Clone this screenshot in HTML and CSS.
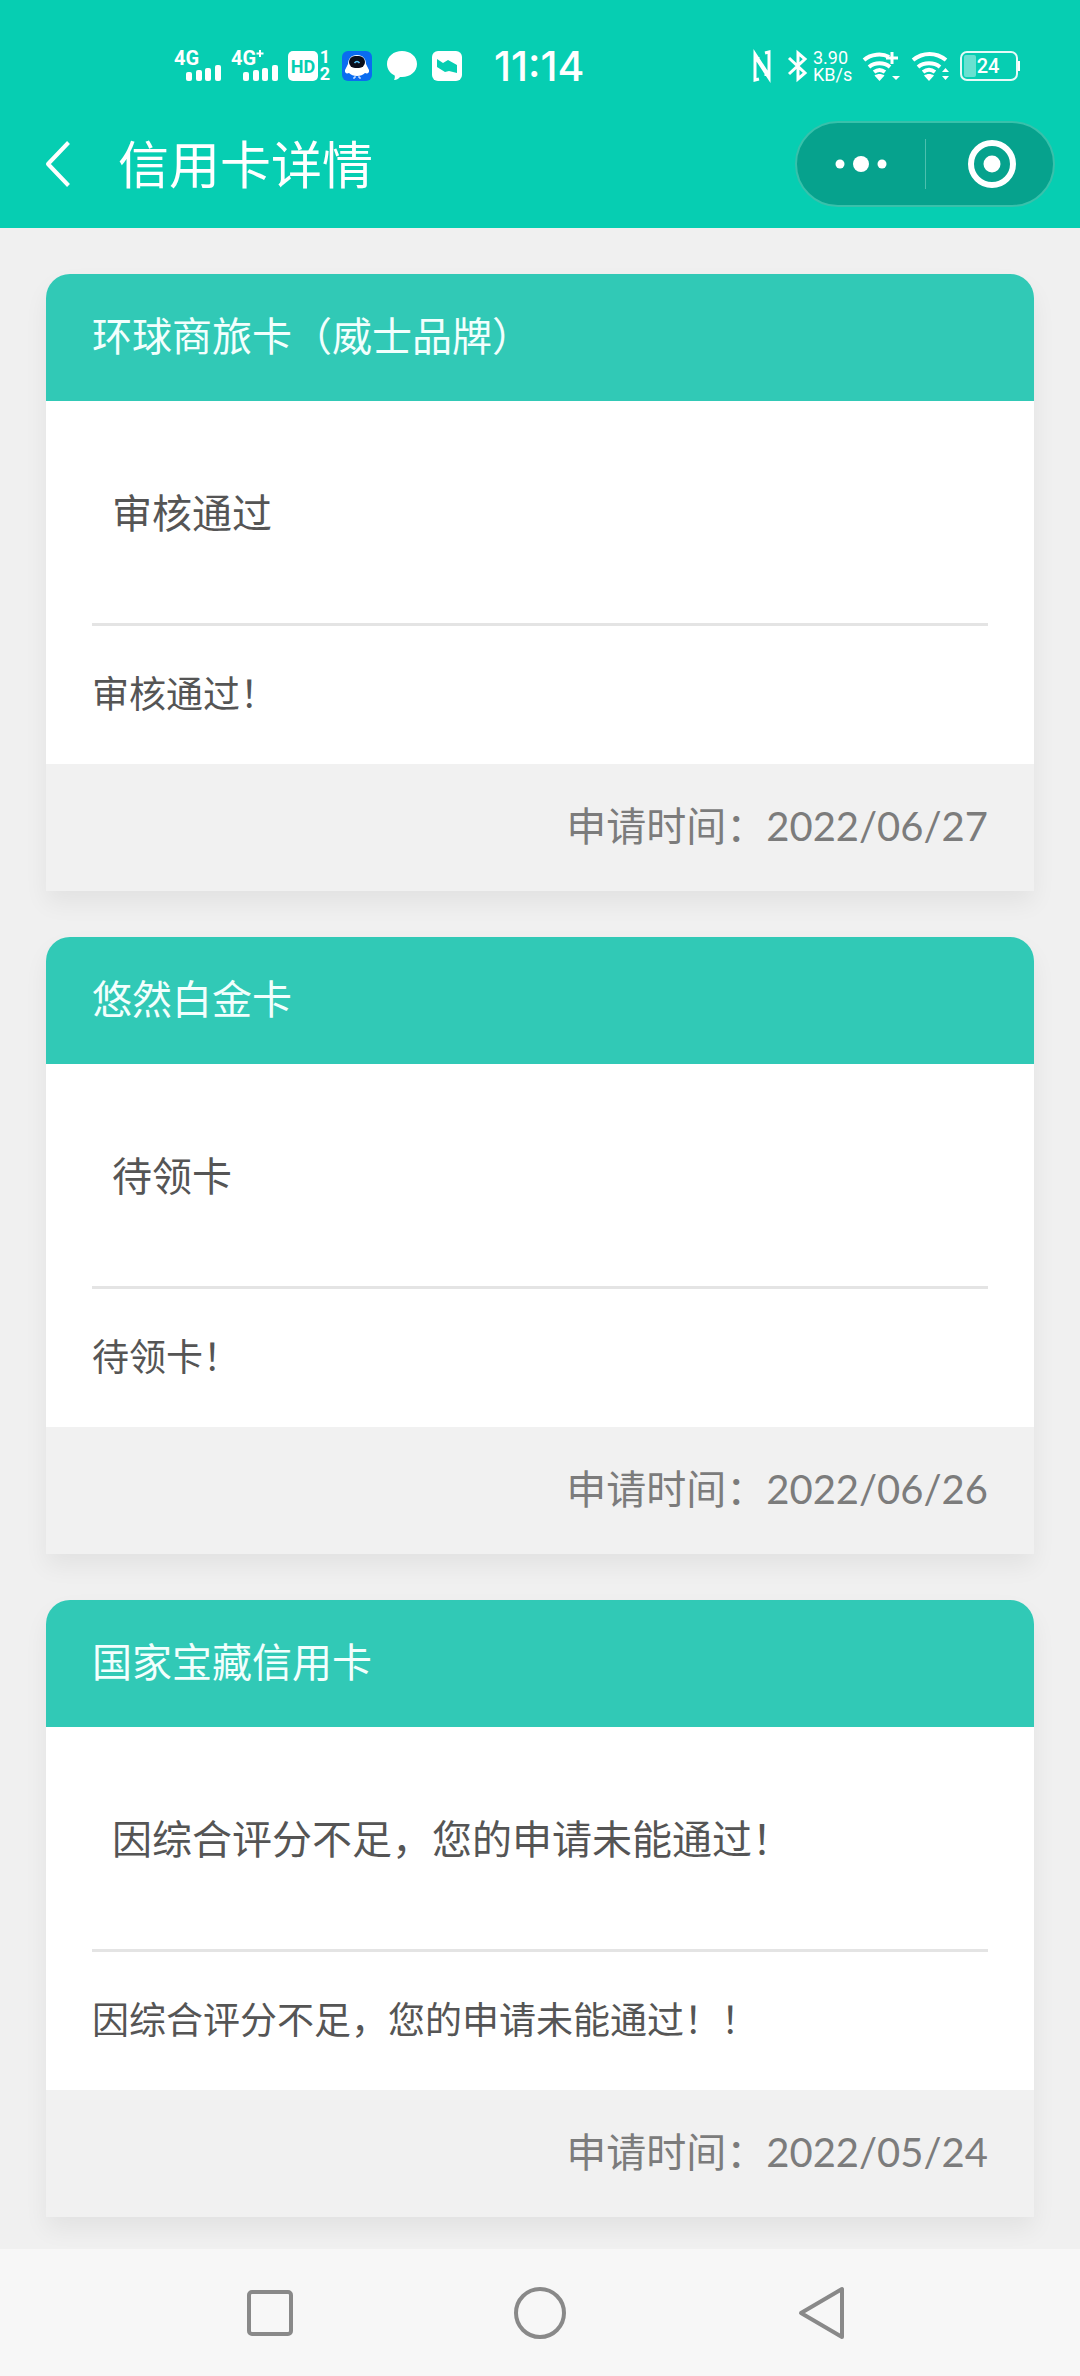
FILE: index.html
```html
<!DOCTYPE html>
<html lang="zh-CN">
<head>
  <meta charset="UTF-8">
  <meta name="viewport" content="width=device-width, initial-scale=1.0">
  <title>信用卡详情</title>
  <link rel="stylesheet" href="styles.css">
</head>
<body>
  <header class="top">
    <div class="status-bar">
      <div class="status-group signals">
        <svg width="47" height="32" viewBox="0 0 47 32" fill="#fff">
          <text x="0" y="15" class="net">4G</text>
          <rect x="12" y="22" width="6" height="9" rx="2"/>
          <rect x="22" y="20" width="6" height="11" rx="2"/>
          <rect x="31" y="18" width="6" height="13" rx="2"/>
          <rect x="41" y="15" width="6" height="16" rx="2"/>
        </svg>
        <svg width="47" height="32" viewBox="0 0 47 32" fill="#fff">
          <text x="0" y="15" class="net">4G</text>
          <path d="M29 0v7M25.500 3.500h7" stroke="#fff" stroke-width="2"/>
          <rect x="12" y="22" width="6" height="9" rx="2"/>
          <rect x="22" y="20" width="6" height="11" rx="2"/>
          <rect x="31" y="18" width="6" height="13" rx="2"/>
          <rect x="41" y="15" width="6" height="16" rx="2"/>
        </svg>
        <svg width="44" height="32" viewBox="0 0 44 32">
          <rect x="0" y="1" width="30" height="30" rx="5" fill="#fff"/>
          <text x="15" y="23" class="hd" text-anchor="middle">HD</text>
          <text x="37" y="13" class="sim" text-anchor="middle">1</text>
          <text x="37" y="30" class="sim" text-anchor="middle">2</text>
        </svg>
      </div>
      <div class="status-group apps">
        <svg width="30" height="30" viewBox="0 0 30 30">
          <rect width="30" height="30" rx="6" fill="#0a6cf0"/>
          <path d="M15 4c-6 0-9 4-9 9l-3 6c-.5 3 1.500 4 4 3 2 2 4.500 3 8 3s6-1 8-3c2.500 1 4.500 0 4-3l-3-6c0-5-3-9-9-9z" fill="#fff"/>
          <rect x="7" y="5" width="16" height="12" rx="6" fill="#0a0f1c"/>
          <path d="M12.500 12c1.500-2 3.500-2 5 0" stroke="#5cc8ff" stroke-width="1.500" fill="none"/>
          <path d="M13 25v2h-2M17 25v2h2" stroke="#fff" fill="none"/>
        </svg>
        <svg width="30" height="30" viewBox="0 0 30 30">
          <path d="M15 0c8.300 0 15 5.400 15 13s-6.700 13-15 13l-2 0c-1 1.500-3 3-6 3 .8-1.500 1-3 .7-4.500C3 22.200 0 18 0 13 0 5.400 6.700 0 15 0z" fill="#fff"/>
        </svg>
        <svg width="30" height="30" viewBox="0 0 30 30">
          <rect width="30" height="30" rx="6" fill="#fff"/>
          <path d="M5 8l6 4 5-3 9 5v8l-8-2-4 1-8-5z" fill="#06ceb2"/>
        </svg>
      </div>
      <time class="clock">11:14</time>
      <div class="status-group device">
        <svg width="18" height="30" viewBox="0 0 18 30" fill="none" stroke="#fff" stroke-width="3">
          <path d="M6 28l-4 1V3l11 17v5M12 2l4-1v26L5 10V6"/>
        </svg>
        <svg class="bluetooth" width="20" height="30" viewBox="0 0 20 30" fill="none" stroke="#fff" stroke-width="3">
          <path d="M1 7l16 15-7 6V2l7 6L1 23"/>
        </svg>
        <div class="speed"><span>3.90</span><span>KB/s</span></div>
        <svg width="38" height="30" viewBox="0 0 38 30" fill="none" stroke="#fff" stroke-width="4">
          <path d="M2 9c7-6 18-7 25-3M7 16c6-5 15-5 21 0M12 21c4-3 7-3 11 0"/>
          <path d="M30 1v12M24 7h12" stroke-width="3"/>
          <path d="M12.500 24.500c3-2 7-2 10 0L17.500 30zM30 25h8l-4 4z" fill="#fff" stroke="none"/>
        </svg>
        <svg width="38" height="30" viewBox="0 0 38 30" fill="none" stroke="#fff" stroke-width="4">
          <path d="M2 9c10-8 23-8 33 0M7 16c6-5 16-5 22 0M12 21c4-3 8-3 12 0"/>
          <path d="M13 24.500c3-2 7-2 10 0L18 30zM31 21h7l-3.500-4zM31 25h7l-3.500 4z" fill="#fff" stroke="none"/>
        </svg>
        <svg width="60" height="30" viewBox="0 0 60 30">
          <rect x="1" y="1" width="56" height="28" rx="6" fill="none" stroke="#fff" stroke-opacity=".9" stroke-width="2"/>
          <rect x="4" y="4" width="12" height="22" rx="2" fill="#fff" fill-opacity=".4"/>
          <rect x="58" y="10" width="2" height="10" fill="#fff"/>
          <text x="28" y="22" class="battery" text-anchor="middle">24</text>
        </svg>
      </div>
    </div>
    <div class="nav-bar">
      <button class="back" type="button" aria-label="返回">
        <svg width="25" height="46" viewBox="0 0 25 46" fill="none" stroke="#fff" stroke-width="4">
          <path d="M23.500 1.500L3 23l20.500 21.500" stroke-linejoin="round"/>
        </svg>
      </button>
      <h1 class="page-title">信用卡详情</h1>
      <div class="capsule">
        <button type="button" aria-label="更多">
          <svg width="52" height="18" viewBox="0 0 52 18" fill="#fff">
            <circle cx="5" cy="9" r="4.500"/>
            <circle cx="26" cy="9" r="8"/>
            <circle cx="47" cy="9" r="4.500"/>
          </svg>
        </button>
        <button class="close" type="button" aria-label="关闭">
          <svg width="48" height="48" viewBox="0 0 48 48" fill="#fff">
            <circle cx="24" cy="24" r="21" fill="none" stroke="#fff" stroke-width="6"/>
            <circle cx="24" cy="24" r="8.500"/>
          </svg>
        </button>
      </div>
    </div>
  </header>

  <main class="card-list">
    <article class="card">
      <h2 class="card-title">环球商旅卡（威士品牌）</h2>
      <div class="card-body">
        <p class="card-state">审核通过</p>
        <p class="card-note">审核通过！</p>
      </div>
      <p class="card-date">申请时间：<time datetime="2022-06-27">2022/06/27</time></p>
    </article>
    <article class="card">
      <h2 class="card-title">悠然白金卡</h2>
      <div class="card-body">
        <p class="card-state">待领卡</p>
        <p class="card-note">待领卡！</p>
      </div>
      <p class="card-date">申请时间：<time datetime="2022-06-26">2022/06/26</time></p>
    </article>
    <article class="card">
      <h2 class="card-title">国家宝藏信用卡</h2>
      <div class="card-body">
        <p class="card-state">因综合评分不足，您的申请未能通过！</p>
        <p class="card-note">因综合评分不足，您的申请未能通过！！</p>
      </div>
      <p class="card-date">申请时间：<time datetime="2022-05-24">2022/05/24</time></p>
    </article>
  </main>

  <nav class="system-nav">
    <button type="button" aria-label="最近任务">
      <svg width="76" height="54" viewBox="0 0 76 54"><rect x="17" y="6" width="42" height="42" rx="3"/></svg>
    </button>
    <button type="button" aria-label="主屏幕">
      <svg width="76" height="54" viewBox="0 0 76 54"><circle cx="38" cy="27" r="24"/></svg>
    </button>
    <button type="button" aria-label="返回上一级">
      <svg width="76" height="54" viewBox="0 0 76 54"><path d="M70 3v48L29 27z"/></svg>
    </button>
  </nav>
</body>
</html>
```
FILE: styles.css
```css
* {
  box-sizing: border-box;
}
body {
  margin: 0;
  min-height: 100vh;
  display: flex;
  flex-direction: column;
  background: #f0f0f0;
  color: #555;
  font-family: "Noto Sans CJK SC", sans-serif;
  font-size: 40px;
}
h1, h2, p {
  margin: 0;
  font-weight: 400;
}
button {
  display: flex;
  align-items: center;
  justify-content: center;
  padding: 0;
  border: none;
  background: none;
  cursor: pointer;
}
svg {
  display: block;
  flex: none;
  overflow: visible;
}

/* status bar */
.top {
  background: #06ceb2;
  color: #fff;
}
.status-bar {
  display: flex;
  align-items: center;
  height: 100px;
  padding: 32px 60px 0 174px;
  font-family: Roboto, sans-serif;
}
.status-group {
  display: flex;
  align-items: center;
  gap: 10px;
}
.apps {
  gap: 15px;
  margin-left: 10px;
}
.clock {
  margin-left: 32px;
  font-family: Inter, sans-serif;
  font-size: 41px;
  font-weight: 500;
  line-height: 40px;
}
.device {
  gap: 11px;
  margin-left: auto;
}
.bluetooth {
  margin: 0 -6px 0 6px;
}
.speed {
  display: flex;
  flex-direction: column;
  width: 38px;
  font-size: 18px;
  line-height: 17px;
}
.net {
  font-size: 20px;
  font-weight: 700;
}
.hd {
  font-size: 18px;
  font-weight: 700;
  fill: #06ceb2;
}
.sim {
  font-size: 18px;
  font-weight: 700;
  fill: #fff;
}
.battery {
  font-size: 20px;
  font-weight: 500;
  fill: #fff;
}

/* title bar */
.nav-bar {
  display: flex;
  align-items: center;
  height: 128px;
  padding: 0 25px 0 45px;
}
.page-title {
  margin: 0 0 4px 48px;
  font-size: 51px;
  line-height: 64px;
}
.capsule {
  display: flex;
  width: 260px;
  height: 86px;
  margin-left: auto;
  border: 2px solid #38c1ab;
  border-radius: 43px;
  background: #06a28d;
}
.capsule button {
  width: 50%;
}
.capsule .close {
  position: relative;
  padding-left: 6px;
}
.close::before {
  content: "";
  position: absolute;
  left: 0;
  top: 16px;
  bottom: 16px;
  width: 1px;
  background: #4cc0ae;
}

/* cards */
.card-list {
  flex: 1;
  display: flex;
  flex-direction: column;
  gap: 46px;
  padding: 46px 46px 31px;
}
.card {
  border-radius: 24px 24px 0 0;
  box-shadow: 0 12px 24px rgba(0, 0, 0, 0.06);
  line-height: 60px;
}
.card-title {
  padding: 30px 46px 37px;
  border-radius: 24px 24px 0 0;
  background: #31c9b6;
  color: #f2fffd;
  font-size: 40px;
}
.card-body {
  padding: 0 46px;
  background: #fff;
}
.card-state {
  padding: 80px 20px 82px;
  border-bottom: 3px solid #e4e4e4;
}
.card-note {
  padding: 36px 0 42px;
  font-size: 37px;
}
.card-date {
  padding: 30px 46px 37px;
  background: #f1f1f1;
  color: #7c7c7c;
  text-align: right;
}
.card-date time {
  font-family: Lato, sans-serif;
  line-height: 40px;
}

/* system navigation */
.system-nav {
  display: grid;
  grid-template-columns: repeat(3, 1fr);
  height: 127px;
  padding: 0 12.5%;
  background: #f7f7f7;
}
.system-nav svg {
  fill: none;
  stroke: #898989;
  stroke-width: 4;
  stroke-linejoin: round;
}
```
